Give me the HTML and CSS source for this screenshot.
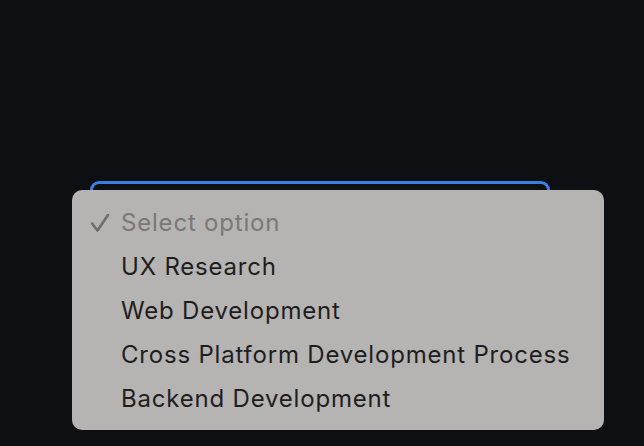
FILE: index.html
```html
<!DOCTYPE html>
<html>
<head>
<meta charset="utf-8">
<link rel="stylesheet" href="styles.css">
</head>
<body>
<div class="stage">
  <div class="field">
    <div class="select"></div>
    <ul class="menu">
      <li class="opt placeholder"><svg class="check" width="20" height="20" viewBox="0 0 20 20"><path d="M2 10.5 L7.5 17.5 L18 2" fill="none" stroke="#6e6c6c" stroke-width="2.6" stroke-linecap="round" stroke-linejoin="round"/></svg>Select option</li>
      <li class="opt">UX Research</li>
      <li class="opt">Web Development</li>
      <li class="opt">Cross Platform Development Process</li>
      <li class="opt">Backend Development</li>
    </ul>
  </div>
</div>
</body>
</html>
```
FILE: styles.css
```css
html, body {
  margin: 0;
  padding: 0;
  background: #0e0f13;
  width: 644px;
  height: 446px;
  overflow: hidden;
}
.stage {
  padding: 181px 0 0 90px;
}
.field {
  position: relative;
  width: 460px;
}
.select {
  height: 44px;
  border: 3px solid #3b7fe2;
  border-bottom: none;
  border-radius: 9px 9px 0 0;
  box-sizing: border-box;
  background: #0e0f13;
}
.menu {
  position: absolute;
  left: -18px;
  top: 9px;
  width: 532px;
  margin: 0;
  padding: 11px 0 9px;
  list-style: none;
  background: #b6b3b3;
  border-radius: 10px;
  box-sizing: border-box;
  font-family: "Inter", "Liberation Sans", sans-serif;
  font-size: 24px;
  letter-spacing: 0.8px;
  color: #1e1e1e;
}
.opt {
  height: 44px;
  line-height: 44px;
  padding-left: 49px;
  position: relative;
  white-space: nowrap;
}
.placeholder {
  color: #7a7878;
}
.check {
  position: absolute;
  left: 18px;
  top: 12px;
}
```
